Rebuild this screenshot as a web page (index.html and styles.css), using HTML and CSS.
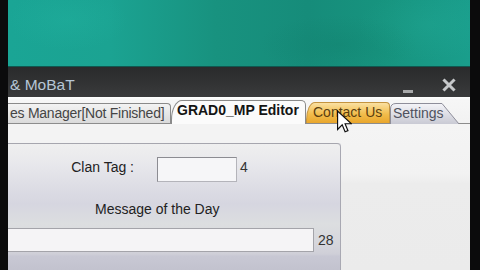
FILE: index.html
```html
<!DOCTYPE html>
<html>
<head>
<meta charset="utf-8">
<link rel="stylesheet" href="styles.css">
</head>
<body>
<div class="frame">
  <div class="edge edge-left"></div>
  <div class="screen">
    <div class="desktop"></div>
    <div class="titlebar">
      <span class="title">&amp; MoBaT</span>
      <div class="controls">
        <span class="min"></span>
        <svg class="close" width="14" height="14" viewBox="0 0 14 14"><path d="M2.5 2.5 L11.5 11.5 M11.5 2.5 L2.5 11.5" stroke="#c6c8ca" stroke-width="3" stroke-linecap="square"/></svg>
      </div>
    </div>
    <div class="tabstrip">
      <div class="tab first">es Manager[Not Finished]</div>
      <div class="tab active">GRAD0_MP Editor</div>
      <div class="tab hot">Contact Us</div>
      <div class="tab last">
        <svg class="tabshape" width="70" height="21" viewBox="0 0 70 21">
          <defs><linearGradient id="sg" x1="0" y1="0" x2="0" y2="1"><stop offset="0" stop-color="#f4f4f8"/><stop offset="1" stop-color="#c9cad4"/></linearGradient></defs>
          <path d="M0.5 21 L0.5 6 Q0.5 0.5 6 0.5 L52 0.5 L69 21" fill="url(#sg)" stroke="#8e8e9a" stroke-width="1"/>
        </svg>
        <span class="tabtext">Settings</span>
      </div>
    </div>
    <div class="content">
      <div class="panel">
        <div class="row row-tag">
          <span class="lbl">Clan Tag :</span>
          <div class="field f-tag"></div>
          <span class="count">4</span>
        </div>
        <div class="motd-label">Message of the Day</div>
        <div class="row row-motd">
          <div class="field f-motd"></div>
          <span class="count">28</span>
        </div>
      </div>
      <div class="side"></div>
    </div>
  </div>
  <div class="edge edge-right"></div>
  <svg class="cursor" width="15" height="24" viewBox="0 0 13 20"><path d="M0.5 0.5 V16.5 L4.5 12.5 L7 18.5 L9.5 17.5 L7 11.5 H12.5 Z" fill="#ffffff" stroke="#111111" stroke-width="1" stroke-linejoin="miter"/></svg>
</div>
</body>
</html>
```

FILE: styles.css
```css
html, body {
  margin: 0;
  padding: 0;
  background: #0a0a0a;
}
.frame {
  position: relative;
  width: 480px;
  height: 270px;
  display: flex;
  overflow: hidden;
  font-family: "Liberation Sans", Arial, sans-serif;
}
.edge {
  background: #0b0b0c;
  flex: none;
}
.edge-left { width: 8px; }
.edge-right { width: 10px; }
.screen {
  width: 462px;
  display: flex;
  flex-direction: column;
  overflow: hidden;
}
.desktop {
  height: 66px;
  border-bottom: 1px solid #0f5850;
  background:
    radial-gradient(ellipse 60px 30px at 60px 20px, rgba(40,190,170,0.2), transparent),
    radial-gradient(ellipse 80px 30px at 330px 45px, rgba(10,110,90,0.18), transparent),
    radial-gradient(ellipse 70px 35px at 420px 25px, rgba(40,180,160,0.2), transparent),
    linear-gradient(90deg, #1aa595 0%, #1ba392 22%, #18927f 45%, #168c7a 65%, #17947f 82%, #1a9e8c 100%);
}
.titlebar {
  height: 30px;
  display: flex;
  background: linear-gradient(#2a2b2c, #333435 60%, #3a3b3c);
  color: #b6c6d6;
}
.title {
  font-size: 15.5px;
  line-height: 30px;
  padding-left: 2px;
  padding-top: 3px;
}
.controls {
  margin-left: auto;
  display: flex;
  align-items: flex-start;
  padding-right: 14px;
}
.min {
  width: 10px;
  height: 3px;
  background: #a8a9aa;
  margin-top: 23px;
}
.close {
  display: block;
  margin-left: 29px;
  margin-top: 11px;
}
.tabstrip {
  height: 26px;
  display: flex;
  align-items: flex-end;
  background: linear-gradient(#ffffff, #f6f6f6 3px, #f2f2f2);
  border-bottom: 1px solid #8c8c8c;
  font-size: 14px;
  white-space: nowrap;
}
.tab {
  box-sizing: border-box;
  flex: none;
  line-height: 20px;
  overflow: visible;
}
.first {
  width: 163px;
  height: 20px;
  padding-left: 2px;
  line-height: 19px;
  letter-spacing: -0.25px;
  color: #454545;
  background: linear-gradient(#f3f3f3, #dadada);
  border-top: 1px solid #8a8a8a;
  border-right: 1px solid #8a8a8a;
  border-top-right-radius: 4px;
}
.active {
  position: relative;
  z-index: 2;
  width: 135px;
  height: 24px;
  margin-bottom: -1px;
  padding-left: 5px;
  line-height: 19px;
  font-weight: bold;
  color: #141414;
  background: #fbfbfb;
  border: 1px solid #8a8a8a;
  border-bottom: none;
  border-radius: 11px 5px 0 0 / 20px 5px 0 0;
}
.hot {
  width: 84px;
  height: 21px;
  padding-left: 6px;
  line-height: 18px;
  color: #5a3e10;
  background: linear-gradient(#fae0a2, #f2bd4c 55%, #e9a62c);
  border: 1px solid #c49440;
  border-bottom: none;
  border-radius: 9px 4px 0 0 / 18px 4px 0 0;
}
.last {
  position: relative;
  width: 70px;
  height: 21px;
  margin-bottom: -1px;
  color: #50525e;
}
.tabshape {
  position: absolute;
  left: 0;
  top: 0;
  display: block;
}
.tabtext {
  position: relative;
  display: block;
  padding-left: 3px;
  padding-top: 1px;
  line-height: 19px;
}
.content {
  flex: 1;
  display: flex;
  background: #f3f3f3;
}
.panel {
  width: 333px;
  box-sizing: border-box;
  margin-top: 19px;
  border-top: 1px solid #a6a6ae;
  border-right: 1px solid #a8a8b2;
  border-top-right-radius: 4px;
  box-shadow: 1px 0 0 #dcdce2;
  background: linear-gradient(#efefef 0px, #e8e8ec 20px, #dcdce4 45px, #d6d6e0 60px, #dcdee0 80px, #d6d6dc 100px, #cfcfd8 110px, #c8c8d4 112px, #c2c2ce 127px);
  font-size: 14px;
  color: #222222;
}
.row {
  display: flex;
  align-items: flex-start;
}
.row-tag {
  padding-top: 13px;
}
.lbl {
  width: 126px;
  text-align: right;
  line-height: 21px;
}
.field {
  box-sizing: border-box;
  background: #f6f6f8;
  border: 1px solid #a4a4aa;
}
.f-tag {
  width: 80px;
  height: 25px;
  margin-left: 23px;
  border-color: #8c8c92 #b4b4ba #b4b4ba #8c8c92;
}
.count {
  color: #333333;
  margin-left: 3px;
  line-height: 21px;
}
.motd-label {
  margin-top: 19px;
  margin-left: 87px;
  line-height: 16px;
}
.row-motd {
  margin-top: 11px;
}
.f-motd {
  width: 306px;
  height: 24px;
  border-left: none;
  background: #f5f4f6;
}
.row-motd .count {
  margin-left: 4px;
  line-height: 24px;
}
.side {
  flex: 1;
  background: linear-gradient(#f4f4f4, #f2f2f2 50px, #ececec 60px, #ebebeb);
}
.cursor {
  position: absolute;
  left: 337px;
  top: 110px;
  z-index: 5;
}
```
